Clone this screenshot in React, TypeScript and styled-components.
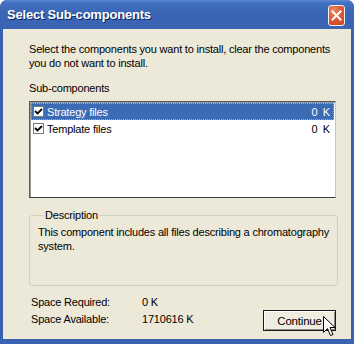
import styled, { createGlobalStyle } from 'styled-components';

const GlobalStyle = createGlobalStyle`
  html, body {
    margin: 0;
    padding: 0;
    background: #ffffff;
  }
  body {
    font-family: "Liberation Sans", Arial, sans-serif;
    font-size: 11px;
    letter-spacing: -0.2px;
    color: #000;
  }
`;

const Window = styled.div`
  width: 354px;
  height: 344px;
  box-sizing: border-box;
  display: flex;
  flex-direction: column;
  background: #3a62b2;
  border-radius: 7px 7px 0 0;
  overflow: hidden;
`;

const TitleBar = styled.div`
  height: 29px;
  flex: none;
  display: flex;
  align-items: center;
  justify-content: space-between;
  padding: 0 9px 0 7px;
  background: linear-gradient(#5d87d2 0px, #4270bf 3px, #3b66b6 12px, #3a63b3 24px, #3c64b3 29px);
`;

const Title = styled.span`
  font-family: "Liberation Sans", Arial, sans-serif;
  font-weight: bold;
  font-size: 13px;
  letter-spacing: -0.2px;
  color: #fff;
  text-shadow: 1px 1px 0 #0c2660;
`;

const CloseButton = styled.div`
  width: 17px;
  height: 21px;
  box-sizing: border-box;
  border: 1px solid #f2f2f2;
  border-radius: 3px;
  background: radial-gradient(circle at 30% 25%, #f08a63 0%, #dc5a34 45%, #c9451f 100%);
  display: flex;
  align-items: center;
  justify-content: center;
  margin-top: 2px;
`;

const Body = styled.div`
  flex: 1;
  margin: 0 3px 5px 3px;
  background: #ece9d8;
  padding: 13px 15px 0 26px;
  display: flex;
  flex-direction: column;
  white-space: nowrap;
  overflow: hidden;
`;

const Intro = styled.p`
  margin: 0;
  line-height: 14px;
`;

const Label = styled.div`
  margin-top: 11px;
  line-height: 14px;
`;

const ListBox = styled.div`
  margin-top: 6px;
  height: 97px;
  flex: none;
  box-sizing: border-box;
  background: #fff;
  border-style: solid;
  border-width: 1px;
  border-color: #5a5a5a #c8c6bb #3e3e3e #5a5a5a;
  box-shadow: inset 1px 1px 0 #9a9a9a;
  padding: 1px 1px 0 1px;
`;

const Row = styled.div<{ $selected?: boolean }>`
  height: 17px;
  box-sizing: border-box;
  display: flex;
  align-items: center;
  padding: 0 2px 0 1px;
  background: ${p => (p.$selected ? '#3c6bb6' : 'transparent')};
  color: ${p => (p.$selected ? '#fff' : '#000')};
  border: 1px dotted ${p => (p.$selected ? '#e0a54a' : 'transparent')};
`;

const Check = styled.span`
  width: 11px;
  height: 11px;
  box-sizing: border-box;
  border: 1px solid #7a7a7a;
  background: #fff;
  display: flex;
  align-items: center;
  justify-content: center;
  margin-right: 3px;
  flex: none;
`;

const RowName = styled.span`
  flex: 1;
`;

const RowSize = styled.span`
  letter-spacing: 1px;
`;

const GroupBox = styled.fieldset`
  margin: 10px 0 0 0;
  height: 78px;
  flex: none;
  box-sizing: border-box;
  border: 1px solid #d0d0bf;
  border-radius: 3px;
  padding: 3px 8px 0 8px;
`;

const Legend = styled.legend`
  padding: 0 2px;
  margin-left: 5px;
  line-height: 14px;
`;

const GroupText = styled.p`
  margin: 0;
  line-height: 14px;
`;

const Footer = styled.div`
  margin-top: 7px;
  display: flex;
  justify-content: space-between;
  align-items: flex-start;
`;

const SpaceGrid = styled.div`
  display: grid;
  grid-template-columns: 111px auto;
  grid-auto-rows: 17px;
  align-items: center;
  padding-left: 2px;
`;

const Button = styled.div`
  position: relative;
  margin-top: 17px;
  width: 73px;
  height: 21px;
  box-sizing: border-box;
  border: 1px solid #1b1b1b;
  background: #efece0;
  box-shadow: inset 1px 1px 0 #ffffff, inset -1px -1px 0 #8c8a80;
  display: flex;
  align-items: center;
  justify-content: center;
  font-size: 11.5px;
`;

const Cursor = styled.svg`
  position: absolute;
  left: 59px;
  top: 5px;
`;

export default function App() {
  return (
    <>
      <GlobalStyle />
      <Window>
        <TitleBar>
          <Title>Select Sub-components</Title>
          <CloseButton>
            <svg width="11" height="11" viewBox="0 0 11 11">
              <path d="M1.5 1.5 L9.5 9.5 M9.5 1.5 L1.5 9.5" stroke="#fff" strokeWidth="2" strokeLinecap="square" />
            </svg>
          </CloseButton>
        </TitleBar>
        <Body>
          <Intro>
            Select the components you want to install, clear the components
            <br />
            you do not want to install.
          </Intro>
          <Label>Sub-components</Label>
          <ListBox>
            {[
              { name: 'Strategy files', size: '0 K', selected: true },
              { name: 'Template files', size: '0 K', selected: false },
            ].map(item => (
              <Row key={item.name} $selected={item.selected}>
                <Check>
                  <svg width="9" height="9" viewBox="0 0 9 9">
                    <path d="M1 4 L3.5 6.5 L8 2" stroke="#000" strokeWidth="1.8" fill="none" />
                  </svg>
                </Check>
                <RowName>{item.name}</RowName>
                <RowSize>{item.size}</RowSize>
              </Row>
            ))}
          </ListBox>
          <GroupBox>
            <Legend>Description</Legend>
            <GroupText>
              This component includes all files describing a chromatography
              <br />
              system.
            </GroupText>
          </GroupBox>
          <Footer>
            <SpaceGrid>
              <span>Space Required:</span>
              <span>0 K</span>
              <span>Space Available:</span>
              <span>1710616 K</span>
            </SpaceGrid>
            <Button>
              Continue
              <Cursor width="13" height="21" viewBox="0 0 13 21">
                <path d="M0.5 0.5 L0.5 16.5 L4.5 12.5 L7.5 19.5 L10 18.5 L7 11.5 L12 11.5 Z" fill="#fff" stroke="#000" strokeWidth="1" strokeLinejoin="miter" />
              </Cursor>
            </Button>
          </Footer>
        </Body>
      </Window>
    </>
  );
}
